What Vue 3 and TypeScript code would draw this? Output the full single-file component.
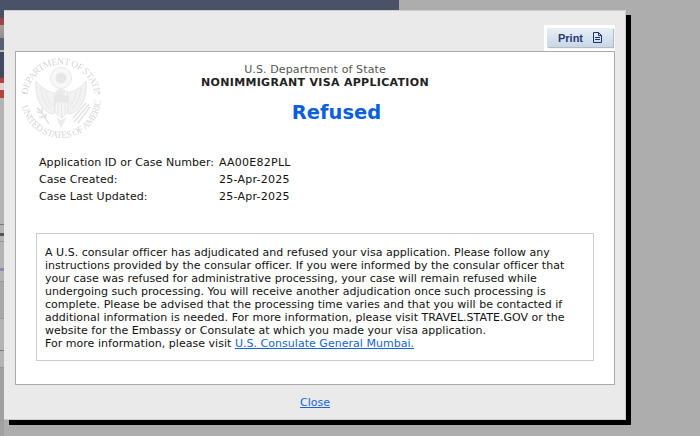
<template>
  <div class="page">
    <div class="backdrop" aria-hidden="true">
      <div class="backdrop__banner"></div>
      <div class="backdrop__strip">
        <i v-for="(seg, i) in stripSegments" :key="i" :style="{ height: `${seg.h}px`, background: seg.c }"></i>
      </div>
    </div>

    <section class="dialog">
      <div class="dialog__tools">
        <div class="print-wrap">
          <button class="print" type="button">
            Print
            <svg viewBox="0 0 9 11" width="9" height="11" aria-hidden="true">
              <path d="M.5.5h5l3 3v7h-8zM5.500.5v3h3M2 5.500h5M2 7.500h5" fill="none" stroke="#1f2d6b" stroke-width="1" />
            </svg>
          </button>
        </div>
      </div>

      <div class="panel">
        <header class="head">
          <svg class="seal" viewBox="0 0 84 84" aria-hidden="true">
            <defs>
              <path id="arcTop" d="M8.500 42A33.500 33.500 0 0 1 75.500 42" />
              <path id="arcBottom" d="M2.200 46A40 40 0 0 0 81.800 46" />
            </defs>
            <g fill="#d6d6d6" font-family="'Liberation Serif', serif" font-size="9.500">
              <text><textPath href="#arcTop" startOffset="3" textLength="98" lengthAdjust="spacing">DEPARTMENT OF STATE</textPath></text>
              <text><textPath href="#arcBottom" startOffset="4" textLength="122" lengthAdjust="spacing">UNITED STATES OF AMERICA</textPath></text>
            </g>
            <circle cx="5" cy="37" r="1" fill="#ccc" />
            <circle cx="80" cy="37" r="1" fill="#ccc" />
            <g opacity="0.65">
              <!-- crest -->
              <circle cx="42" cy="22" r="10.500" fill="#f4f4f4" stroke="#ddd" />
              <circle cx="42" cy="22" r="5.500" fill="#dcdcdc" />
              <!-- wings -->
              <path d="M36 37C30 36 22 32 17 25c-1 9 1 20 7 27 3 4 7 6 11 6z" fill="#ececec" stroke="#d8d8d8" />
              <path d="M48 37c6-1 14-5 19-12 1 9-1 20-7 27-3 4-7 6-11 6z" fill="#ececec" stroke="#d8d8d8" />
              <path d="M22 32c1 8 3 15 9 21M27 35c1 6 2 10 6 15M62 32c-1 8-3 15-9 21M57 35c-1 6-2 10-6 15" fill="none" stroke="#dadada" />
              <!-- head -->
              <path d="M36 38c0-3 3-5 6-5s5 2 8 3l-4 1-1 4h-8z" fill="#e0e0e0" />
              <!-- shield -->
              <path d="M36 40h13v14c0 4-4 6-6.500 8-2.500-2-6.500-4-6.500-8z" fill="#f2f2f2" stroke="#d4d4d4" />
              <path d="M36 40h13v6H36zM39 47v11M42.500 47v14M46 47v11" fill="#dedede" stroke="#d8d8d8" />
              <!-- tail -->
              <path d="M37 61l5 11 6-11-6 3z" fill="#e2e2e2" />
              <!-- olive branch and arrows -->
              <path d="M18 52c4 2 8 9 12 16M18 56l5 1M20 61l5 0M23 52l0 6M27 58l-1 5" fill="none" stroke="#d2d2d2" stroke-width="1.500" />
              <path d="M55 66l15-18M59 67l12-16M54 62l13-15" fill="none" stroke="#d4d4d4" stroke-width="1.500" />
            </g>
          </svg>
          <div class="head__dept">U.S. Department of State</div>
          <div class="head__title">NONIMMIGRANT VISA APPLICATION</div>
          <h1 class="head__status">Refused</h1>
        </header>

        <dl class="facts">
          <template v-for="row in facts" :key="row.label">
            <dt>{{ row.label }}</dt>
            <dd>{{ row.value }}</dd>
          </template>
        </dl>

        <div class="notice">
          <p v-for="line in notice" :key="line">{{ line }}</p>
          <p>For more information, please visit <a href="#">U.S. Consulate General Mumbai.</a></p>
        </div>
      </div>

      <footer class="dialog__foot"><a href="#">Close</a></footer>
    </section>
  </div>
</template>

<script setup lang="ts">
const facts = [
  { label: 'Application ID or Case Number:', value: 'AA00E82PLL' },
  { label: 'Case Created:', value: '25-Apr-2025' },
  { label: 'Case Last Updated:', value: '25-Apr-2025' },
]

// line breaks are fixed so they land where the original wraps
const notice = [
  'A U.S. consular officer has adjudicated and refused your visa application. Please follow any',
  'instructions provided by the consular officer. If you were informed by the consular officer that',
  'your case was refused for administrative processing, your case will remain refused while',
  'undergoing such processing. You will receive another adjudication once such processing is',
  'complete. Please be advised that the processing time varies and that you will be contacted if',
  'additional information is needed. For more information, please visit TRAVEL.STATE.GOV or the',
  'website for the Embassy or Consulate at which you made your visa application.',
]

// the dimmed page peeking out left of the dialog, top to bottom from y=10
const stripSegments = [
  { h: 8, c: '#4a5268' },
  { h: 7, c: '#9a4646' },
  { h: 13, c: 'linear-gradient(#b09a98, #8f8f8f)' },
  { h: 12, c: '#5a6072' },
  { h: 2, c: '#bbb' },
  { h: 26, c: '#424a63' },
  { h: 5, c: '#b5433a' },
  { h: 7, c: '#e0d0d0' },
  { h: 8, c: '#b5433a' },
  { h: 126, c: '#b4b4b4' },
  { h: 1, c: '#777' },
  { h: 8, c: '#b4b4b4' },
  { h: 3, c: '#555' },
  { h: 5, c: '#b4b4b4' },
  { h: 1, c: '#999' },
  { h: 26, c: '#b4b4b4' },
  { h: 3, c: '#8a8ab0' },
  { h: 10, c: '#b4b4b4' },
  { h: 1, c: '#999' },
  { h: 36, c: '#a8a8a8' },
  { h: 1, c: '#999' },
  { h: 31, c: '#b4b4b4' },
  { h: 1, c: '#777' },
  { h: 16, c: '#b4b4b4' },
  { h: 1, c: '#999' },
  { h: 68, c: '#a0a0a0' },
]
</script>

<style>
body {
  margin: 0;
  background: #adadad;
}
</style>

<style scoped>
.page {
  position: relative;
  width: 700px;
  height: 436px;
  overflow: hidden;
  background: #adadad;
  font-family: "DejaVu Sans", Verdana, sans-serif;
  font-size: 11px;
  color: #111;
}

.backdrop {
  position: absolute;
  inset: 0;
}

.backdrop__banner {
  width: 399px;
  height: 10px;
  background: #4a5268;
}

.backdrop__strip {
  display: flex;
  flex-direction: column;
  width: 4px;
}

.backdrop__strip i {
  display: block;
  flex: none;
}

.dialog {
  position: absolute;
  top: 10px;
  left: 4px;
  display: flex;
  flex-direction: column;
  box-sizing: border-box;
  width: 622px;
  height: 410px;
  padding: 0 10px 0 11px;
  border-top: 1px solid #ccc;
  border-right: 1px solid #ccc;
  border-bottom: 1px solid #ccc;
  background: #eaeaea;
  box-shadow: 5px 5px 0 #000;
}

.dialog__tools {
  display: flex;
  justify-content: flex-end;
  height: 40px;
}

.print-wrap {
  box-sizing: border-box;
  align-self: flex-end;
  width: 71px;
  height: 26px;
  padding: 3px 2px 0 3px;
  background: #fff;
}

.print {
  display: flex;
  align-items: center;
  justify-content: center;
  gap: 10px;
  width: 66px;
  height: 19px;
  padding: 0;
  border: 0;
  background: linear-gradient(#e8f0f6, #c6d7e8);
  box-shadow: 1px 1px 1px #bbb;
  color: #2a3a70;
  font: bold 11px "Liberation Sans", Arial, sans-serif;
}

.panel {
  box-sizing: border-box;
  height: 334px;
  padding: 0 20px;
  border: 1px solid #aaa;
  background: #fff;
}

.head {
  position: relative;
  height: 92px;
  text-align: center;
}

.seal {
  position: absolute;
  top: 4px;
  left: -17px;
  width: 84px;
  height: 84px;
  overflow: visible;
  filter: blur(0.3px);
}

.head__dept {
  padding-top: 11px;
  color: #555;
  letter-spacing: 0.12px;
  line-height: 13px;
}

.head__title {
  color: #222;
  font-weight: bold;
  letter-spacing: 0.31px;
  line-height: 13px;
}

.head__status {
  margin: 11px 0 0 43px;
  color: #0a5fdc;
  font-size: 19.5px;
  font-weight: bold;
  line-height: 26px;
}

.facts {
  display: grid;
  grid-template-columns: 180px 1fr;
  grid-auto-rows: 17px;
  margin: 10px 0 0 3px;
  line-height: 17px;
}

.facts dt,
.facts dd {
  margin: 0;
}

.facts dt {
  letter-spacing: 0.07px;
}

.facts dd {
  letter-spacing: 0.25px;
}

.notice {
  box-sizing: border-box;
  height: 128px;
  margin-top: 28px;
  padding: 12px 8px;
  border: 1px solid #ccc;
  letter-spacing: 0.03px;
  line-height: 13px;
  white-space: nowrap;
}

.notice p {
  margin: 0;
}

a {
  color: #1565d8;
  text-decoration: underline;
}

.dialog__foot {
  flex: 1;
  display: flex;
  align-items: center;
  justify-content: center;
}
</style>
